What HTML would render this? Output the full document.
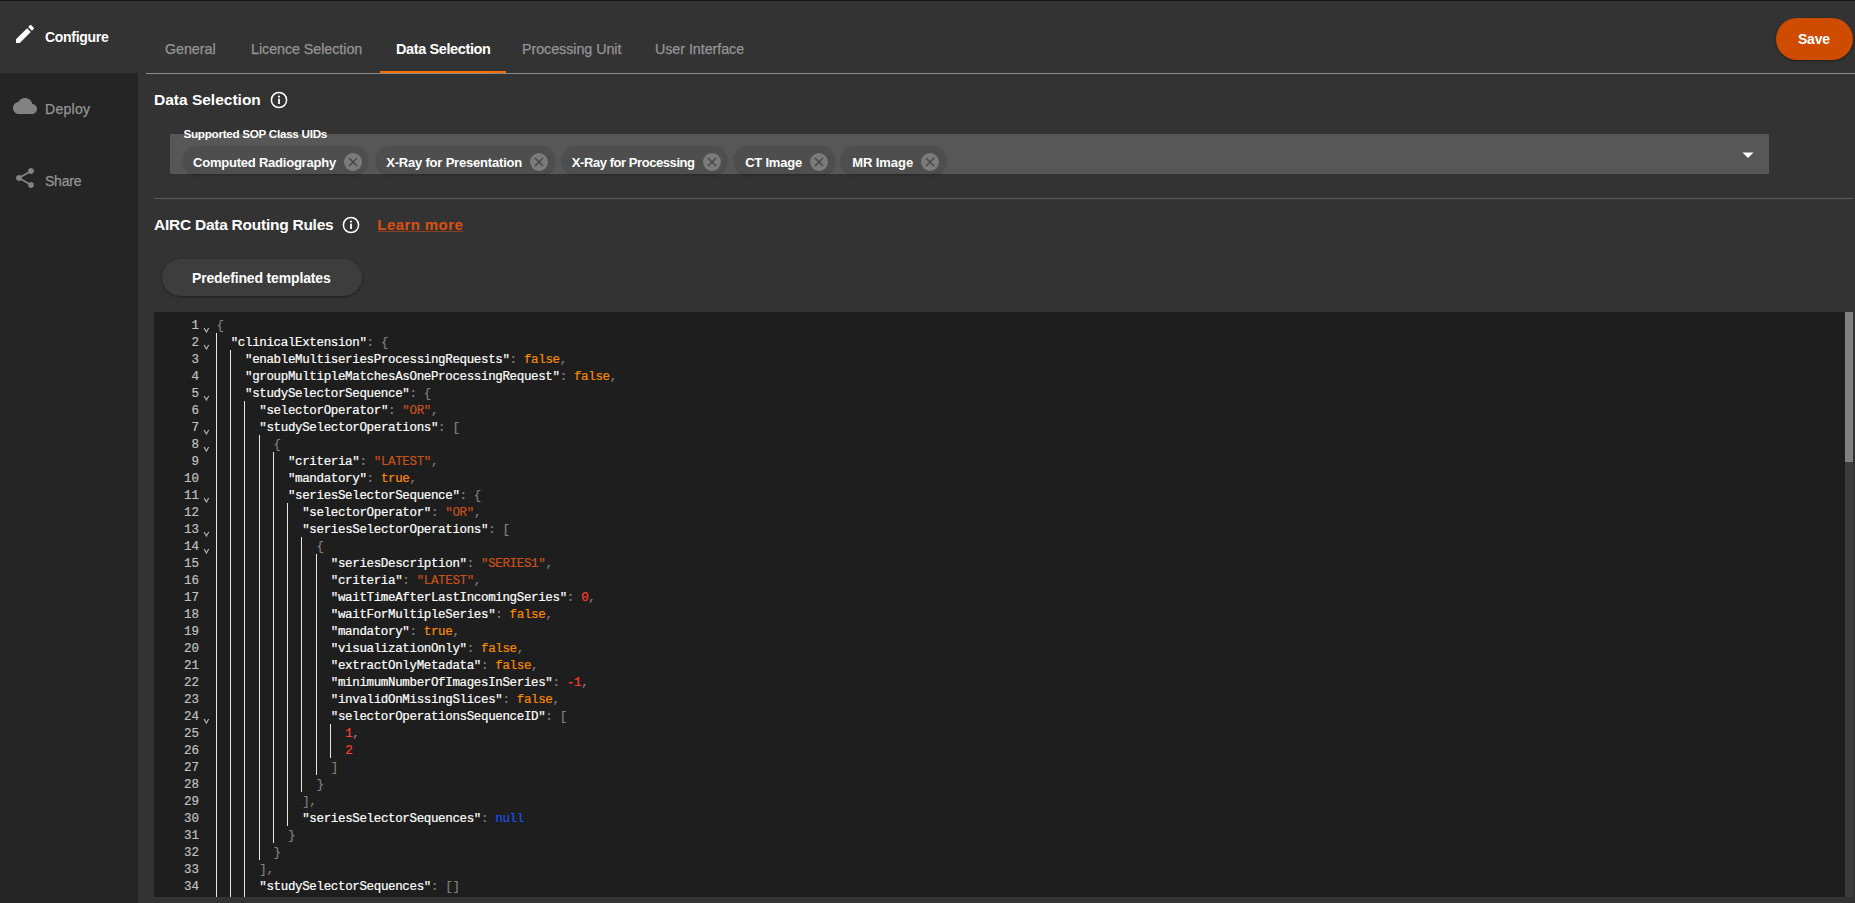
<!DOCTYPE html>
<html><head><meta charset="utf-8">
<style>
*{margin:0;padding:0;box-sizing:border-box}
html,body{width:1855px;height:903px;overflow:hidden;background:#333333;font-family:"Liberation Sans",sans-serif;position:relative}
.abs{position:absolute;white-space:nowrap}
#topline{left:0;top:0;width:1855px;height:1px;background:#141414}
#side{left:0;top:73px;width:138px;height:830px;background:#252525}
#hline{left:146px;top:73px;width:1709px;height:1px;background:#8a8a8a}
#uline{left:380px;top:71px;width:126px;height:2px;background:#ff6e00}
#save{left:1776px;top:18px;width:77px;height:42px;border-radius:21px;background:#cf4b00;box-shadow:0 1px 3px rgba(0,0,0,.45)}
#field{left:170px;top:134.4px;width:1599px;height:39.2px;background:#575757;border-radius:1px}
.chip{top:146px;height:28px;border-radius:14px;background:#4e4e4e;box-shadow:0 1.5px 2.5px rgba(0,0,0,.2)}
#hline2{left:154px;top:198px;width:1699px;height:1px;background:#5e5e5e}
#tmpl{left:162px;top:259px;width:200px;height:37px;border-radius:18.5px;background:#3d3d3d;box-shadow:0 1px 3px rgba(0,0,0,.4)}
#editor{left:154px;top:312px;width:1691px;height:585px;background:#1e1e1e;overflow:hidden}
#sbtrack{left:1845px;top:312px;width:8px;height:585px;background:#3c3c3c}
#sbthumb{left:1845px;top:312px;width:8px;height:150px;background:#808080}
#gut{left:0;top:5.8px;width:45px;text-align:right;font-family:"Liberation Mono",monospace;font-size:12.5px;line-height:17px;color:#c0c0c0;-webkit-text-stroke:0.2px currentColor}
#code{left:62.4px;top:5.8px;font-family:"Liberation Mono",monospace;font-size:12.5px;line-height:17px;letter-spacing:-0.35px;white-space:pre;color:#fff;-webkit-text-stroke:0.2px currentColor}
#code div{height:17px}
.g{width:1px;background:#e6e6e6}
.k{color:#ffffff}.p{color:#808080}.b{color:#fb8a00}.s{color:#c6521a}.n{color:#ff3b2a}.u{color:#2050e8}
</style></head><body>
<div class="abs" id="topline"></div>
<div class="abs" id="side"></div>
<svg class="abs" style="left:13px;top:22px" width="24" height="24" viewBox="0 0 24 24"><path d="M3 17.25V21h3.75L17.81 9.94l-3.75-3.75L3 17.25zM20.71 7.04c.39-.39.39-1.02 0-1.41l-2.34-2.34c-.39-.39-1.02-.39-1.41 0l-1.83 1.83 3.75 3.75 1.83-1.83z" fill="#fff"/></svg>
<div class="abs t" style="left:45.00px;top:26.65px;font-size:14px;line-height:20px;font-weight:bold;color:#fff;letter-spacing:-0.29px;">Configure</div>
<svg class="abs" style="left:13px;top:94px" width="24" height="24" viewBox="0 0 24 24"><path d="M19.35 10.04C18.67 6.59 15.64 4 12 4 9.11 4 6.6 5.64 5.35 8.04 2.34 8.36 0 10.91 0 14c0 3.31 2.69 6 6 6h13c2.76 0 5-2.24 5-5 0-2.64-2.05-4.78-4.65-4.96z" fill="#828282"/></svg>
<div class="abs t" style="left:45.00px;top:98.65px;font-size:14px;line-height:20px;color:#959595;letter-spacing:0.28px;-webkit-text-stroke:0.25px #959595;">Deploy</div>
<svg class="abs" style="left:12.9px;top:166px" width="24" height="24" viewBox="0 0 24 24"><path d="M18 16.08c-.76 0-1.44.3-1.96.77L8.91 12.7c.05-.23.09-.46.09-.7s-.04-.47-.09-.7l7.05-4.11c.54.5 1.25.81 2.04.81 1.66 0 3-1.34 3-3s-1.34-3-3-3-3 1.34-3 3c0 .24.04.47.09.7L8.04 9.81C7.5 9.31 6.79 9 6 9c-1.66 0-3 1.34-3 3s1.34 3 3 3c.79 0 1.5-.31 2.04-.81l7.12 4.16c-.05.21-.08.43-.08.65 0 1.61 1.31 2.92 2.92 2.92 1.61 0 2.92-1.31 2.92-2.92s-1.31-2.92-2.92-2.92z" fill="#828282"/></svg>
<div class="abs t" style="left:45.00px;top:170.75px;font-size:14px;line-height:20px;color:#959595;letter-spacing:-0.22px;-webkit-text-stroke:0.25px #959595;">Share</div>
<div class="abs t" style="left:165.00px;top:39.15px;font-size:14.3px;line-height:20px;color:#959595;letter-spacing:-0.05px;-webkit-text-stroke:0.25px #959595;">General</div>
<div class="abs t" style="left:251.00px;top:39.15px;font-size:14.3px;line-height:20px;color:#959595;letter-spacing:-0.05px;-webkit-text-stroke:0.25px #959595;">Licence Selection</div>
<div class="abs t" style="left:522.00px;top:39.15px;font-size:14.3px;line-height:20px;color:#959595;letter-spacing:-0.05px;-webkit-text-stroke:0.25px #959595;">Processing Unit</div>
<div class="abs t" style="left:655.00px;top:39.15px;font-size:14.3px;line-height:20px;color:#959595;letter-spacing:-0.05px;-webkit-text-stroke:0.25px #959595;">User Interface</div>
<div class="abs t" style="left:396.00px;top:39.08px;font-size:14.5px;line-height:20px;font-weight:bold;color:#fff;letter-spacing:-0.39px;">Data Selection</div>
<div class="abs" id="hline"></div><div class="abs" id="uline"></div>
<div class="abs" id="save"></div>
<div class="abs t" style="left:1798.30px;top:29.03px;font-size:15.5px;line-height:20px;font-weight:bold;color:#fff;letter-spacing:-0.2px;transform:scaleX(0.9);transform-origin:0 0;">Save</div>
<div class="abs t" style="left:154.00px;top:90.23px;font-size:15.5px;line-height:20px;font-weight:bold;color:#fff;letter-spacing:0.0px;">Data Selection</div>
<svg class="abs" style="left:270px;top:91px" width="18" height="18" viewBox="0 0 18 18"><circle cx="9" cy="9" r="7.6" stroke="#fff" stroke-width="1.5" fill="none"/><circle cx="9" cy="5.6" r="1.05" fill="#fff"/><rect x="8.1" y="7.6" width="1.8" height="5.4" fill="#fff"/></svg>
<div class="abs" id="field"></div>
<div class="abs chip" style="left:182.7px;width:185.3px"></div>
<div class="abs t" style="left:193.00px;top:152.60px;font-size:13px;line-height:20px;font-weight:bold;color:#fff;letter-spacing:-0.221px;">Computed Radiography</div>
<svg class="abs" style="left:344px;top:153px" width="18" height="18" viewBox="0 0 18 18"><circle cx="9" cy="9" r="9" fill="#7b7b7b"/><path d="M5 5 L13 13 M13 5 L5 13" stroke="#474747" stroke-width="1.45"/></svg>
<div class="abs chip" style="left:375.6px;width:179.0px"></div>
<div class="abs t" style="left:386.20px;top:152.60px;font-size:13px;line-height:20px;font-weight:bold;color:#fff;letter-spacing:-0.19499999999999998px;">X-Ray for Presentation</div>
<svg class="abs" style="left:530px;top:153px" width="18" height="18" viewBox="0 0 18 18"><circle cx="9" cy="9" r="9" fill="#7b7b7b"/><path d="M5 5 L13 13 M13 5 L5 13" stroke="#474747" stroke-width="1.45"/></svg>
<div class="abs chip" style="left:561.9px;width:164.9px"></div>
<div class="abs t" style="left:571.80px;top:152.60px;font-size:13px;line-height:20px;font-weight:bold;color:#fff;letter-spacing:-0.43400000000000005px;">X-Ray for Processing</div>
<svg class="abs" style="left:703px;top:153px" width="18" height="18" viewBox="0 0 18 18"><circle cx="9" cy="9" r="9" fill="#7b7b7b"/><path d="M5 5 L13 13 M13 5 L5 13" stroke="#474747" stroke-width="1.45"/></svg>
<div class="abs chip" style="left:734.0px;width:100.5px"></div>
<div class="abs t" style="left:745.20px;top:152.60px;font-size:13px;line-height:20px;font-weight:bold;color:#fff;letter-spacing:-0.226px;">CT Image</div>
<svg class="abs" style="left:810px;top:153px" width="18" height="18" viewBox="0 0 18 18"><circle cx="9" cy="9" r="9" fill="#7b7b7b"/><path d="M5 5 L13 13 M13 5 L5 13" stroke="#474747" stroke-width="1.45"/></svg>
<div class="abs chip" style="left:841.0px;width:104.7px"></div>
<div class="abs t" style="left:852.20px;top:152.60px;font-size:13px;line-height:20px;font-weight:bold;color:#fff;letter-spacing:-0.067px;">MR Image</div>
<svg class="abs" style="left:921px;top:153px" width="18" height="18" viewBox="0 0 18 18"><circle cx="9" cy="9" r="9" fill="#7b7b7b"/><path d="M5 5 L13 13 M13 5 L5 13" stroke="#474747" stroke-width="1.45"/></svg>
<svg class="abs" style="left:1741px;top:150.5px" width="14" height="8" viewBox="0 0 14 8"><path d="M1.5 1.5 L12.5 1.5 L7 7 Z" fill="#fff"/></svg>
<div class="abs t" style="left:183.50px;top:123.75px;font-size:11.7px;line-height:20px;font-weight:bold;color:#fff;letter-spacing:-0.29px;">Supported SOP Class UIDs</div>
<div class="abs" id="hline2"></div>
<div class="abs t" style="left:154.00px;top:215.43px;font-size:15.5px;line-height:20px;font-weight:bold;color:#fff;letter-spacing:-0.25px;">AIRC Data Routing Rules</div>
<svg class="abs" style="left:342px;top:216px" width="18" height="18" viewBox="0 0 18 18"><circle cx="9" cy="9" r="7.6" stroke="#fff" stroke-width="1.5" fill="none"/><circle cx="9" cy="5.6" r="1.05" fill="#fff"/><rect x="8.1" y="7.6" width="1.8" height="5.4" fill="#fff"/></svg>
<div class="abs t" style="left:377.30px;top:214.60px;font-size:15px;line-height:20px;font-weight:bold;color:#dc5014;letter-spacing:0.42px;text-decoration:underline;text-decoration-color:#8a3f1a;text-underline-offset:1px;text-decoration-thickness:1px;">Learn more</div>
<div class="abs" id="tmpl"></div>
<div class="abs t" style="left:192.00px;top:268.25px;font-size:14px;line-height:20px;font-weight:bold;color:#fff;letter-spacing:-0.15px;">Predefined templates</div>
<div class="abs" id="editor">
<div class="abs" id="gut"><div>1</div><div>2</div><div>3</div><div>4</div><div>5</div><div>6</div><div>7</div><div>8</div><div>9</div><div>10</div><div>11</div><div>12</div><div>13</div><div>14</div><div>15</div><div>16</div><div>17</div><div>18</div><div>19</div><div>20</div><div>21</div><div>22</div><div>23</div><div>24</div><div>25</div><div>26</div><div>27</div><div>28</div><div>29</div><div>30</div><div>31</div><div>32</div><div>33</div><div>34</div></div>
<svg class="abs fold" style="left:49px;top:15.0px" width="7" height="6" viewBox="0 0 7 6"><path d="M1.1 1 L3.4 5 L5.7 1" stroke="#b4b4b4" stroke-width="1.15" fill="none"/></svg>
<svg class="abs fold" style="left:49px;top:32.0px" width="7" height="6" viewBox="0 0 7 6"><path d="M1.1 1 L3.4 5 L5.7 1" stroke="#b4b4b4" stroke-width="1.15" fill="none"/></svg>
<svg class="abs fold" style="left:49px;top:83.0px" width="7" height="6" viewBox="0 0 7 6"><path d="M1.1 1 L3.4 5 L5.7 1" stroke="#b4b4b4" stroke-width="1.15" fill="none"/></svg>
<svg class="abs fold" style="left:49px;top:117.0px" width="7" height="6" viewBox="0 0 7 6"><path d="M1.1 1 L3.4 5 L5.7 1" stroke="#b4b4b4" stroke-width="1.15" fill="none"/></svg>
<svg class="abs fold" style="left:49px;top:134.0px" width="7" height="6" viewBox="0 0 7 6"><path d="M1.1 1 L3.4 5 L5.7 1" stroke="#b4b4b4" stroke-width="1.15" fill="none"/></svg>
<svg class="abs fold" style="left:49px;top:185.0px" width="7" height="6" viewBox="0 0 7 6"><path d="M1.1 1 L3.4 5 L5.7 1" stroke="#b4b4b4" stroke-width="1.15" fill="none"/></svg>
<svg class="abs fold" style="left:49px;top:219.0px" width="7" height="6" viewBox="0 0 7 6"><path d="M1.1 1 L3.4 5 L5.7 1" stroke="#b4b4b4" stroke-width="1.15" fill="none"/></svg>
<svg class="abs fold" style="left:49px;top:236.0px" width="7" height="6" viewBox="0 0 7 6"><path d="M1.1 1 L3.4 5 L5.7 1" stroke="#b4b4b4" stroke-width="1.15" fill="none"/></svg>
<svg class="abs fold" style="left:49px;top:406.0px" width="7" height="6" viewBox="0 0 7 6"><path d="M1.1 1 L3.4 5 L5.7 1" stroke="#b4b4b4" stroke-width="1.15" fill="none"/></svg>
<div class="abs g" style="left:62px;top:20.7px;height:581px"></div>
<div class="abs g" style="left:76px;top:37.7px;height:564px"></div>
<div class="abs g" style="left:90px;top:88.7px;height:513px"></div>
<div class="abs g" style="left:105px;top:122.7px;height:425px"></div>
<div class="abs g" style="left:119px;top:139.7px;height:391px"></div>
<div class="abs g" style="left:133px;top:190.7px;height:323px"></div>
<div class="abs g" style="left:147px;top:224.7px;height:255px"></div>
<div class="abs g" style="left:162px;top:241.7px;height:221px"></div>
<div class="abs g" style="left:176px;top:411.7px;height:34px"></div>
<div class="abs" id="code"><div><span class="p">{</span></div><div>  <span class="k">&quot;clinicalExtension&quot;</span><span class="p">: {</span></div><div>    <span class="k">&quot;enableMultiseriesProcessingRequests&quot;</span><span class="p">: </span><span class="b">false</span><span class="p">,</span></div><div>    <span class="k">&quot;groupMultipleMatchesAsOneProcessingRequest&quot;</span><span class="p">: </span><span class="b">false</span><span class="p">,</span></div><div>    <span class="k">&quot;studySelectorSequence&quot;</span><span class="p">: {</span></div><div>      <span class="k">&quot;selectorOperator&quot;</span><span class="p">: </span><span class="s">&quot;OR&quot;</span><span class="p">,</span></div><div>      <span class="k">&quot;studySelectorOperations&quot;</span><span class="p">: [</span></div><div>        <span class="p">{</span></div><div>          <span class="k">&quot;criteria&quot;</span><span class="p">: </span><span class="s">&quot;LATEST&quot;</span><span class="p">,</span></div><div>          <span class="k">&quot;mandatory&quot;</span><span class="p">: </span><span class="b">true</span><span class="p">,</span></div><div>          <span class="k">&quot;seriesSelectorSequence&quot;</span><span class="p">: {</span></div><div>            <span class="k">&quot;selectorOperator&quot;</span><span class="p">: </span><span class="s">&quot;OR&quot;</span><span class="p">,</span></div><div>            <span class="k">&quot;seriesSelectorOperations&quot;</span><span class="p">: [</span></div><div>              <span class="p">{</span></div><div>                <span class="k">&quot;seriesDescription&quot;</span><span class="p">: </span><span class="s">&quot;SERIES1&quot;</span><span class="p">,</span></div><div>                <span class="k">&quot;criteria&quot;</span><span class="p">: </span><span class="s">&quot;LATEST&quot;</span><span class="p">,</span></div><div>                <span class="k">&quot;waitTimeAfterLastIncomingSeries&quot;</span><span class="p">: </span><span class="n">0</span><span class="p">,</span></div><div>                <span class="k">&quot;waitForMultipleSeries&quot;</span><span class="p">: </span><span class="b">false</span><span class="p">,</span></div><div>                <span class="k">&quot;mandatory&quot;</span><span class="p">: </span><span class="b">true</span><span class="p">,</span></div><div>                <span class="k">&quot;visualizationOnly&quot;</span><span class="p">: </span><span class="b">false</span><span class="p">,</span></div><div>                <span class="k">&quot;extractOnlyMetadata&quot;</span><span class="p">: </span><span class="b">false</span><span class="p">,</span></div><div>                <span class="k">&quot;minimumNumberOfImagesInSeries&quot;</span><span class="p">: </span><span class="n">-1</span><span class="p">,</span></div><div>                <span class="k">&quot;invalidOnMissingSlices&quot;</span><span class="p">: </span><span class="b">false</span><span class="p">,</span></div><div>                <span class="k">&quot;selectorOperationsSequenceID&quot;</span><span class="p">: [</span></div><div>                  <span class="n">1</span><span class="p">,</span></div><div>                  <span class="n">2</span></div><div>                <span class="p">]</span></div><div>              <span class="p">}</span></div><div>            <span class="p">],</span></div><div>            <span class="k">&quot;seriesSelectorSequences&quot;</span><span class="p">: </span><span class="u">null</span></div><div>          <span class="p">}</span></div><div>        <span class="p">}</span></div><div>      <span class="p">],</span></div><div>      <span class="k">&quot;studySelectorSequences&quot;</span><span class="p">: []</span></div></div>
</div>
<div class="abs" id="sbtrack"></div><div class="abs" id="sbthumb"></div>
</body></html>
